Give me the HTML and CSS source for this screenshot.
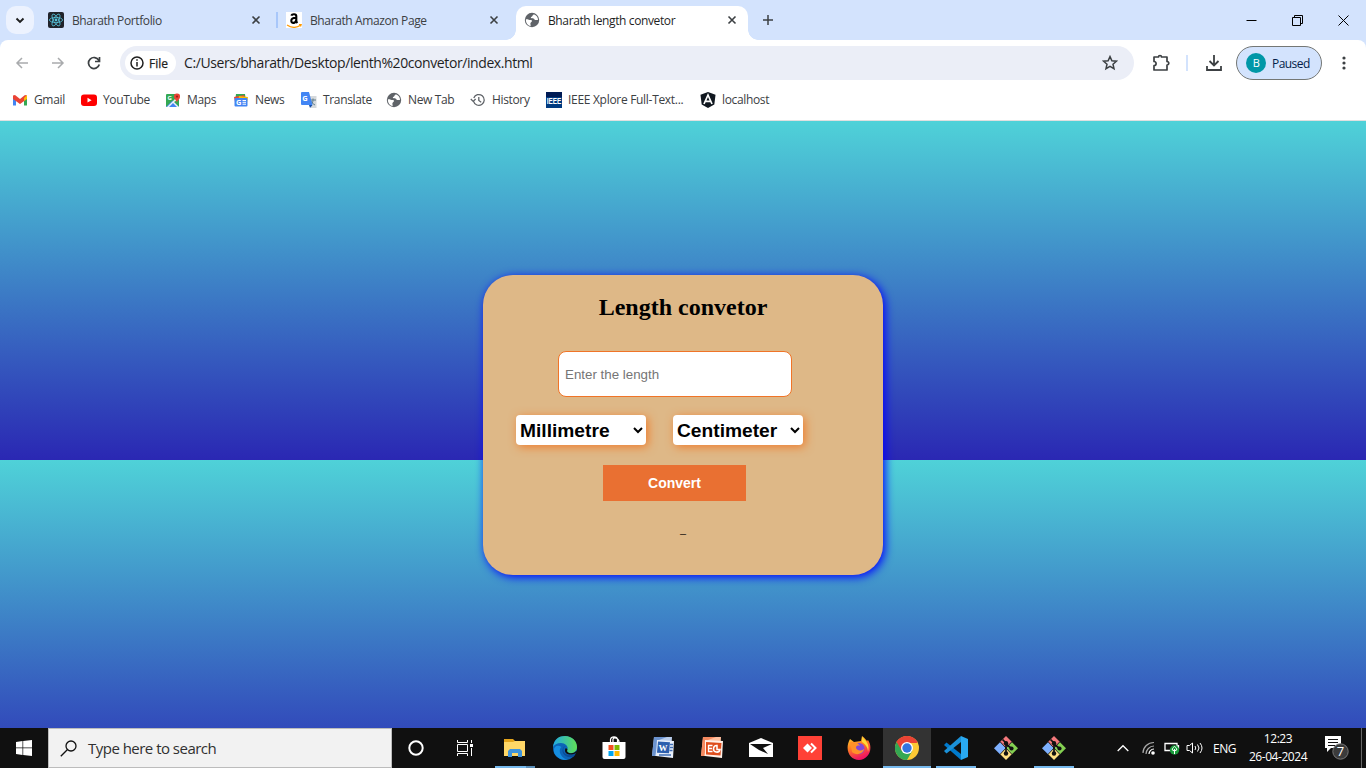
FILE: index.html
```html
<!DOCTYPE html>
<html lang="en">
<head>
<meta charset="utf-8">
<title>Bharath length convetor</title>
<link rel="stylesheet" href="styles.css">
</head>
<body>
<svg class="defs" width="0" height="0">
  <symbol id="globe" viewBox="0 0 16 16"><circle cx="8" cy="8" r="7.2" fill="#5f6368"/><path d="M2 7.3C4 7 5 8 6.500 8c1.300 0 1.800.7 1.300 1.600-.5 1-1.500.9-1.400 2.200 0 .8.500 1.500.2 2.300C3.500 13.500 1.700 11 1.900 7.300zM9.800 2.200c-.3 1-1.400 1-1.500 1.800 0 .7-1.500.6-1.500 1.500 0 1 1.700.8 2.600.9 1 .1 1 1.600 2.100 1.700.9.100 1.500-.3 2.500 0 .2-2.600-1.500-5-4.200-5.900z" fill="#fff"/></symbol>
  <symbol id="close" viewBox="0 0 10 10"><path d="M1.500 1.500l7 7m0-7l-7 7" stroke="#3c4043" stroke-width="1.600" fill="none"/></symbol>
  <symbol id="git" viewBox="0 0 24 24"><path d="M12 0l6 6-6 6-6-6z" fill="#f4787c"/><path d="M6 6.300l6 6-6 6-6-6z" fill="#7eb0ff"/><path d="M18 6.300l6 6-6 6-6-6z" fill="#84d052"/><path d="M12 12.300l6 5.700-6 6-6-6z" fill="#ffe083"/><path d="M6 5.500l12 13M18 5.500L6 18.500" stroke="#222" stroke-width=".9"/><path d="M8.500 3.500L12 7v11M12 8l5.500 4.500" stroke="#111" stroke-width="1.700" fill="none"/><g fill="#111"><circle cx="12" cy="7.200" r="2.200"/><circle cx="12" cy="17.500" r="2.200"/><circle cx="17.500" cy="12.500" r="2.100"/></g></symbol>
</svg>

<div class="tabs">
  <div class="tab-search"><svg width="10" height="7" viewBox="0 0 10 7"><path d="M1.500 1.500L5 5l3.500-3.500" fill="none" stroke="#1f1f1f" stroke-width="1.900"/></svg></div>
  <div class="tab first">
    <svg width="16" height="16" viewBox="0 0 16 16"><rect width="16" height="16" rx="2" fill="#20232a"/><g fill="none" stroke="#56c4dc" stroke-width=".8"><ellipse cx="8" cy="8" rx="6.600" ry="2.600"/><ellipse cx="8" cy="8" rx="6.600" ry="2.600" transform="rotate(60 8 8)"/><ellipse cx="8" cy="8" rx="6.600" ry="2.600" transform="rotate(120 8 8)"/></g><circle cx="8" cy="8" r="1.400" fill="#56c4dc"/></svg>
    <span class="title">Bharath Portfolio</span><svg class="x" width="10" height="10"><use href="#close"/></svg>
  </div>
  <div class="tab second">
    <svg width="16" height="16" viewBox="0 0 16 16"><rect width="16" height="16" fill="#fff"/><path d="M5.300 3.700C6 1.700 10.300 1.500 10.300 4.300v4.200c0 1.500.5 2 1.100 2.600M10 5.800C6.500 5.800 5.300 7 5.300 8.700c0 3.200 4.300 3 5-1" fill="none" stroke="#000" stroke-width="2.100"/><path d="M1 13c4.500 3 9.500 3 13.500.3M13 12.500h2.200l-.7 2" fill="none" stroke="#f90" stroke-width="1.200"/></svg>
    <span class="title">Bharath Amazon Page</span><svg class="x" width="10" height="10"><use href="#close"/></svg>
  </div>
  <div class="tab active">
    <svg width="16" height="16"><use href="#globe"/></svg>
    <span class="title">Bharath length convetor</span><svg class="x" width="10" height="10"><use href="#close"/></svg>
  </div>
  <svg class="plus" width="12" height="12" viewBox="0 0 12 12"><path d="M6 1v10M1 6h10" stroke="#3c4043" stroke-width="1.500"/></svg>
  <div class="window-buttons">
    <svg width="11" height="11" viewBox="0 0 11 11"><path d="M.5 5.500h10" stroke="#000"/></svg>
    <svg width="11" height="11" viewBox="0 0 11 11"><path d="M.5 2.500h8v8h-8zM2.500 2.500v-2h8v8h-2" fill="none" stroke="#000"/></svg>
    <svg width="11" height="11" viewBox="0 0 11 11"><path d="M.5.500l10 10m0-10l-10 10" stroke="#000"/></svg>
  </div>
</div>

<div class="toolbar">
  <svg class="nav" width="14" height="14" viewBox="0 0 14 14"><path d="M13 7H2M7 2L2 7l5 5" fill="none" stroke="#a9abad" stroke-width="1.500"/></svg>
  <svg class="nav" width="14" height="14" viewBox="0 0 14 14"><path d="M1 7h11M7 2l5 5-5 5" fill="none" stroke="#a9abad" stroke-width="1.500"/></svg>
  <svg class="nav" width="14" height="14" viewBox="0 0 14 14"><path d="M11.800 4.300A5.500 5.500 0 1 0 12.300 8.500M12.500 1v4.500H8" fill="none" stroke="#3c4043" stroke-width="1.700"/></svg>
  <div class="address">
    <div class="file"><svg width="14" height="14" viewBox="0 0 14 14"><circle cx="7" cy="7" r="6" fill="none" stroke="#1f1f1f" stroke-width="1.500"/><path d="M7 6v4.500M7 3.300v1.500" stroke="#1f1f1f" stroke-width="1.500"/></svg><span>File</span></div>
    <span class="url">C:/Users/bharath/Desktop/lenth%20convetor/index.html</span>
    <svg class="star" width="16" height="16" viewBox="0 0 16 16"><path d="M8 1.600l1.900 4.200 4.500.4L11 9.200l1 4.500-4-2.400-4 2.400 1-4.500-3.400-3 4.500-.4z" fill="none" stroke="#3c4043" stroke-width="1.500"/></svg>
  </div>
  <svg class="ext" width="18" height="18" viewBox="0 0 18 18"><path d="M2 3h4.500a1.500 1.500 0 0 1 3 0H15v4.500a1.500 1.500 0 0 1 0 3.500v5H2v-4.300a2 2 0 0 0 0-4.200z" fill="none" stroke="#3c4043" stroke-width="1.700" stroke-linejoin="round"/></svg>
  <i class="divider"></i>
  <svg class="down" width="18" height="18" viewBox="0 0 18 18"><path d="M9 1v10M4.500 7L9 11.500 13.500 7M2 12v4h14v-4" fill="none" stroke="#3c4043" stroke-width="1.800"/></svg>
  <div class="profile"><b>B</b><span>Paused</span></div>
  <svg class="menu" width="4" height="16" viewBox="0 0 4 16" fill="#3c4043"><circle cx="2" cy="3" r="1.600"/><circle cx="2" cy="8" r="1.600"/><circle cx="2" cy="13" r="1.600"/></svg>
</div>

<div class="bookmarks">
  <div><svg width="16" height="16" viewBox="0 0 16 16"><path d="M1 13.500V4l3 2v7.500z" fill="#4285f4"/><path d="M15 13.500V4l-3 2v7.500z" fill="#34a853"/><path d="M1 3.500L3 3l5 4 5-4 2 .5V7l-7 5-7-5z" fill="#ea4335"/><path d="M12 6l3-3v4l-3 2z" fill="#fbbc04"/></svg><span>Gmail</span></div>
  <div><svg width="16" height="16" viewBox="0 0 16 16"><rect y="2.500" width="16" height="11.500" rx="3" fill="#f00"/><path d="M6.500 5.800v4.800L10.600 8.200z" fill="#fff"/></svg><span>YouTube</span></div>
  <div><svg width="16" height="16" viewBox="0 0 16 16"><rect x="1" y="2" width="13" height="13" rx="1" fill="#34a853"/><path d="M7.500 8.500L14 15H1z" fill="#4285f4"/><path d="M2 15L14 3v4l-5 3 5 5h-2L8 11l-4 4z" fill="#f1f3f4"/><text x="2.500" y="7.500" class="tiny">G</text><path d="M12 11c-.3-3-3-3.500-3-6.200A3 3 0 0 1 12 1.500a3 3 0 0 1 3 3.300C15 7.500 12.300 8 12 11z" fill="#ea4335"/><circle cx="12" cy="4.600" r="1.100" fill="#9c2219"/></svg><span>Maps</span></div>
  <div><svg width="16" height="16" viewBox="0 0 16 16"><path d="M3 2h9l1 8H2z" fill="#34a853"/><path d="M1 5l10-2 2 7H2z" fill="#ea4335"/><path d="M6 4l9 1-1 6H5z" fill="#fbbc04"/><rect x="1.500" y="6" width="13" height="8.500" rx="1" fill="#4285f4"/><text x="3" y="12.600" class="small">G</text><path d="M9.500 8.500h3.500M9.500 10.300h3.500M9.500 12.200h3.500" stroke="#fff"/></svg><span>News</span></div>
  <div><svg width="16" height="16" viewBox="0 0 16 16"><path d="M6 4h9.500v12H10z" fill="#d5d9dc"/><path d="M9 8h6M12 6.500V8c0 3-1.500 4.500-3 5m1-4c.5 2 2.500 3 4 4" fill="none" stroke="#607d8b"/><path d="M1 0h7l3.500 13H1a1 1 0 0 1-1-1V1a1 1 0 0 1 1-1z" fill="#4285f4"/><path d="M8 13h3.500L9 16z" fill="#174ea6"/><text x="1.300" y="9" class="small">G</text></svg><span>Translate</span></div>
  <div><svg width="16" height="16"><use href="#globe"/></svg><span>New Tab</span></div>
  <div><svg width="16" height="16" viewBox="0 0 16 16"><path d="M3.600 9.300A5.400 5.400 0 1 0 3.800 6M.8 7l2.400 2.400L5.600 7M8.800 5v3.500l2.400 1.700" fill="none" stroke="#5f6368" stroke-width="1.300"/></svg><span>History</span></div>
  <div><svg width="16" height="16" viewBox="0 0 16 16"><rect width="16" height="16" fill="#003a80"/><path d="M0 0h16v5H0z" fill="#001b55"/><text x=".7" y="11.500" class="ieee" textLength="14.600" lengthAdjust="spacingAndGlyphs">IEEE</text></svg><span class="long">IEEE Xplore Full-Text...</span></div>
  <div><svg width="16" height="16" viewBox="0 0 16 16"><path d="M8 0l7.500 2.700L14.300 12.500 8 16 1.700 12.500.5 2.700z" fill="#111820"/><path d="M4 12L8 3l4 9M5.500 9.300h5" fill="none" stroke="#fff" stroke-width="1.700"/></svg><span>localhost</span></div>
</div>

<main class="page">
  <section class="card">
    <h2>Length convetor</h2>
    <input class="length" type="text" placeholder="Enter the length">
    <div class="units">
      <select><option>Millimetre</option></select>
      <select><option>Centimeter</option></select>
    </div>
    <button class="convert">Convert</button>
    <p class="result">–</p>
  </section>
</main>

<footer class="taskbar">
  <div class="start"><svg width="16" height="16" viewBox="0 0 16 16" fill="#fff"><path d="M0 2l6.500-1v6.500H0zM7.200.9L16 0v7.500H7.200zM0 8.300h6.500V15L0 14zM7.200 8.300H16V16l-8.800-1z"/></svg></div>
  <div class="search"><svg width="17" height="17" viewBox="0 0 17 17"><circle cx="11" cy="6" r="5" fill="none" stroke="#111" stroke-width="1.300"/><path d="M7.500 9.500L.8 16.200" stroke="#111" stroke-width="1.300"/></svg><span>Type here to search</span></div>
  <div class="sys"><svg width="16" height="16" viewBox="0 0 16 16"><circle cx="8" cy="8" r="6.700" fill="none" stroke="#fff" stroke-width="2"/></svg></div>
  <div class="sys"><svg width="17" height="16" viewBox="0 0 17 16"><path d="M1.500 0v2.500h10V0M1.500 16v-2.500h10V16M1.500 4.500h10v7h-10zM15.500 0v3M15.500 8v8" fill="none" stroke="#fff"/><path d="M14 4h3v3h-3z" fill="#fff"/></svg></div>
  <div class="app explorer"><svg width="24" height="24" viewBox="0 0 24 24"><path d="M1 3h9l2 2h10v4H1z" fill="#e5a51c"/><path d="M1 6h9l2-1h10v15H1z" fill="#ffd767"/><path d="M5 21v-6l2-2h10l2 2v6h-4v-4H9v4z" fill="#3f94dc"/></svg></div>
  <div class="app"><svg width="24" height="24" viewBox="0 0 24 24"><defs><linearGradient id="eg"><stop stop-color="#20a9e4"/><stop offset="1" stop-color="#60df55"/></linearGradient></defs><circle cx="12" cy="12" r="12" fill="#0c64b7"/><path d="M0 11C1 3 6 0 12 0c7 0 12 5 12 11 0 4-3 6-6 6-4 0-5-2-3.500-3.500C15.500 10 12 7 8 7c-4 0-7 2-8 4z" fill="url(#eg)"/><path d="M8.500 11C4 15 9 23 15 23.500 9 25 2 21 1 16 0 11 4 8 8.500 11z" fill="#168ee0"/><path d="M13 10c-4 0-4 9 3 9 3 0 5-1 7-2-1 1-1 2-2.500 3.500-5 2-11-1-11-6C9.500 12 11 10 13 10z" fill="#0a4c97"/><path d="M14.500 13.500C13 16 16 17.200 18 17.200c2 0 4-.8 5.500-2.500l.5 1.800c-5 3.500-12 2.500-12-2 0-1 .3-2 1-2.500z" fill="#101010"/></svg></div>
  <div class="app"><svg width="24" height="24" viewBox="0 0 24 24"><path d="M8.500 6V3.500C9 0 15 0 15.500 3.500V6M11 6V3c1-2 6-1 6 3" fill="none" stroke="#fff" stroke-width="1.200"/><path d="M.5 6h23v15q0 2-2 2h-19q-2 0-2-2z" fill="#fff"/><path d="M6.500 9h5v5h-5z" fill="#f25022"/><path d="M12.500 9h5v5h-5z" fill="#7fba00"/><path d="M6.500 15h5v5h-5z" fill="#00a4ef"/><path d="M12.500 15h5v5h-5z" fill="#ffb900"/></svg></div>
  <div class="app"><svg width="24" height="24" viewBox="0 0 24 24"><path d="M3 1h18l-1 19H1z" fill="#b9cdec"/><path d="M3 1h13l-8 3-4 16H1z" fill="#6b93cf"/><path d="M6 4l17 1-1 17-17-2z" fill="#e9f0fb"/><path d="M7 5.500l12 .7-1 11-12-.5z" fill="#2c5fae"/><text x="7.500" y="15" class="word">W</text><path d="M19 8.500h3M19 11.500h3M18.500 14.500h3M8 19h12" stroke="#3f6db5" stroke-width="1.300"/></svg></div>
  <div class="app"><svg width="24" height="24" viewBox="0 0 24 24"><path d="M3 1h18l-1 19H1z" fill="#ffc0a0"/><path d="M3 1h13l-8 3-4 16H1z" fill="#f58a60"/><path d="M5 4l18 1-1 17-17-2z" fill="#fff0e8"/><path d="M6 6l15.500 1-1 12.500-14.500-1z" fill="#df4d1c"/><path d="M8 9.500h4.500M8 12.500h4M8 15.500h4.500M8.500 9v7" stroke="#fff" stroke-width="1.300"/><path d="M17 9.500a3.300 3.300 0 1 0 3 4h-3z" fill="none" stroke="#fff" stroke-width="1.500"/></svg></div>
  <div class="app"><svg width="24" height="24" viewBox="0 0 24 24"><path d="M0 7l12-5 12 5v14H0z" fill="#fff"/><path d="M1 8h22l-9 4 5 6-9-4z" fill="#111"/></svg></div>
  <div class="app"><svg width="24" height="24" viewBox="0 0 24 24"><path d="M0 0h24v24H0z" fill="#ff4136"/><path d="M5 12l4.500-4.500L14 12l-4.500 4.500z" fill="#fff"/><path d="M13 7.500l4.500 4.500-4.500 4.500" fill="none" stroke="#fff" stroke-width="2"/></svg></div>
  <div class="app"><svg width="24" height="24" viewBox="0 0 24 24"><defs><linearGradient id="ff" x2=".4" y2="1"><stop stop-color="#ffdf32"/><stop offset=".5" stop-color="#ff7a23"/><stop offset="1" stop-color="#ef1462"/></linearGradient></defs><path d="M3 3l4 3 7-1 1-5c3 2 4 4 5 5l1-1c6 9 0 20-9 20C3 24-3 14 3 3z" fill="url(#ff)"/><circle cx="12" cy="12.500" r="5.500" fill="#8047d9"/><path d="M3 6c4 0 8 0 10 4-3-1-4 0-4 2 1 2 4 4 8 1-1 5-8 7-12 3z" fill="#ff9129"/><path d="M15 1c5 4 8 9 6 15 0-5-3-8-6-10z" fill="#ffd936"/></svg></div>
  <div class="app current"><svg width="24" height="24" viewBox="0 0 24 24"><circle cx="12" cy="12" r="12" fill="#fcc934"/><path d="M12 12L1.600 6A12 12 0 0 1 22.400 6z" fill="#ea4335"/><path d="M12 12L1.600 6A12 12 0 0 0 12 24l5.200-9z" fill="#34a853"/><path d="M12 6h10.400L17.200 15z" fill="#fcc934"/><path d="M1.600 6l5.200 9L9 7h13.400A12 12 0 0 0 1.600 6z" fill="#ea4335"/><circle cx="12" cy="12" r="6" fill="#fff"/><circle cx="12" cy="12" r="4.700" fill="#3474e0"/></svg></div>
  <div class="app open"><svg width="24" height="24" viewBox="0 0 24 24"><path d="M2.500 6.500L17 18v6L0 9z" fill="#007acc"/><path d="M2.500 17.500L17 6V0L0 15z" fill="#1b91d8"/><path d="M17 0l7 3v18l-7 3z" fill="#29a9f2"/></svg></div>
  <div class="app"><svg width="24" height="24"><use href="#git"/></svg></div>
  <div class="app open"><svg width="24" height="24"><use href="#git"/></svg></div>
  <div class="tray">
    <svg class="chev" width="12" height="8" viewBox="0 0 12 8"><path d="M.7 7L6 1.700 11.300 7" fill="none" stroke="#fff" stroke-width="1.300"/></svg>
    <svg class="wifi" width="14" height="14" viewBox="0 0 14 14"><g fill="none" stroke="#aaa" stroke-width="1.200"><path d="M1 12C1 6 6 1.500 12 1.500"/><path d="M4 13c0-4 3.500-8 8-8"/><path d="M7 13c0-2.500 2-5 5-5" stroke="#fff"/></g><circle cx="11" cy="12" r="1.800" fill="#fff"/></svg>
    <svg class="battery" width="16" height="14" viewBox="0 0 16 14"><path d="M1 2.500h12v7H1zM14.500 4v4" fill="none" stroke="#fff" stroke-width="1.300"/><circle cx="10.500" cy="9" r="4.700" fill="#199c3b"/><path d="M10.500 13V8m-2.200 1c0-2 1-2.500 2.200-3.500 1.200 1 2.200 1.500 2.200 3.500l-2.200 1z" fill="none" stroke="#fff"/></svg>
    <svg class="sound" width="17" height="14" viewBox="0 0 17 14"><path d="M1 4.500h2.500L6.500 2v10L3.500 9.500H1zM9 5q1.500 2 0 4M11.500 3.500q3 3.500 0 7M14 2q4 5 0 10" fill="none" stroke="#fff"/></svg>
    <span class="lang">ENG</span>
    <div class="clock"><span class="time">12:23</span><span class="date">26-04-2024</span></div>
    <div class="notice"><svg width="24" height="25" viewBox="0 0 24 25"><path d="M0 0h16v12H6l-4 4v-4H0z" fill="#fff"/><path d="M3 3.500h10M3 6.500h10M3 9.500h7" stroke="#111"/><circle cx="15.500" cy="15.500" r="7.700" fill="#3b3b3b" stroke="#777"/><text x="15.500" y="20" class="count">7</text></svg></div>
  </div>
</footer>
</body>
</html>
```
FILE: styles.css
```css
* { box-sizing: border-box; }
body { margin: 0; width: 1366px; height: 768px; overflow: hidden; display: flex; flex-direction: column; background: #d3e3fd; font-family: "Open Sans", "Noto Sans", sans-serif; font-size: 12px; color: #3c4043; }
svg { display: block; flex: none; }
.defs { position: absolute; }
span { white-space: nowrap; }

.tabs { height: 40px; display: flex; align-items: center; background: #d3e3fd; }
.tab-search { width: 28px; height: 28px; margin-left: 6px; border-radius: 10px; background: #ecf2fe; display: flex; align-items: center; justify-content: center; }
.tab { width: 238px; height: 34px; display: flex; align-items: center; align-self: flex-end; padding: 0 17px 6px 10px; }
.tab.first { margin-left: 4px; padding-right: 15px; }
.tab.second { width: 240px; padding-right: 17px; background: linear-gradient(#a8c7fa, #a8c7fa) -2px 6px / 4px 16px no-repeat; }
.tab.active { width: 232px; border-radius: 10px 10px 0 0; background: #fff; padding: 0 11px 6px 8px; position: relative; color: #1f1f1f; }
.tab.active::before, .tab.active::after { content: ""; position: absolute; bottom: 0; width: 10px; height: 10px; }
.tab.active::before { left: -10px; background: radial-gradient(circle at 0 0, transparent 9.5px, #fff 10px); }
.tab.active::after { right: -10px; background: radial-gradient(circle at 100% 0, transparent 9.5px, #fff 10px); }
.title { margin-left: 8px; letter-spacing: -.38px; }
.x { margin-left: auto; }
.plus { margin-left: 14px; }
.window-buttons { display: flex; margin-left: auto; gap: 35px; padding-right: 17px; }

.toolbar { height: 46px; display: flex; align-items: center; background: #fff; border-radius: 8px 8px 0 0; padding-left: 15px; }
.nav { margin-right: 22px; }
.address { width: 1014px; height: 34px; margin-left: -3px; border-radius: 17px; background: #ebeef7; display: flex; align-items: center; padding: 0 16px 0 5px; }
.file { width: 51px; height: 24px; border-radius: 12px; background: #fff; display: flex; align-items: center; padding-left: 5px; gap: 5px; color: #1f1f1f; -webkit-text-stroke: .25px #1f1f1f; }
.url { font-size: 14px; margin-left: 8px; color: #1f1f1f; letter-spacing: -.41px; line-height: 18px; padding-bottom: 1px; }
.star { margin-left: auto; }
.ext { margin-left: 18px; }
.divider { width: 2px; height: 16px; background: #d3e3fd; margin-left: 16px; }
.down { margin-left: 17px; }
.profile { width: 86px; height: 34px; margin-left: 13px; border: 1px solid #747775; border-radius: 17px; background: #d3e3fd; display: flex; align-items: center; padding-left: 9px; gap: 6px; color: #041e49; letter-spacing: -.55px; }
.profile b { width: 20px; height: 20px; border-radius: 50%; background: #0097a7; color: #fff; font-size: 11px; font-weight: 400; line-height: 20px; text-align: center; }
.menu { margin-left: 20px; }

.bookmarks { height: 35px; background: #fff; border-bottom: 1px solid #e0e0e0; display: grid; grid-template-columns: 69px 84px 68px 68px 85px 84px 76px 154px 90px; padding: 0 0 7px 12px; align-items: center; }
.bookmarks div { display: flex; align-items: center; gap: 6px; letter-spacing: -.35px; }
.bookmarks .long { letter-spacing: -.3px; }
.tiny { font: 700 6px "Open Sans", sans-serif; fill: #fff; }
.small { font: 700 7.500px "Open Sans", sans-serif; fill: #fff; letter-spacing: 0; }
.ieee { font: 700 9px "Liberation Sans", sans-serif; fill: #fff; letter-spacing: 0; }

.page { height: 607px; display: flex; justify-content: center; padding-top: 154px; background: linear-gradient(#4fd2d8, #2a27b3) 0 0 / 100% 339px repeat; }
.card { width: 400px; height: 300px; border-radius: 30px; background: burlywood; box-shadow: 2px 2px 10px blue; color: #000; }
.card h2 { font: 700 24px/28px "Liberation Serif", serif; text-align: center; margin: 18px 0 30px; }
.length { display: block; width: 234px; height: 46px; margin-left: 75px; padding: 1px 6px; border: 1px solid #f07427; border-radius: 8px; font: 13.333px "Liberation Sans", sans-serif; }
.units { display: flex; gap: 27px; margin: 18px 0 20px 33px; }
.units select { width: 130px; height: 30px; border: 0; border-radius: 4px; background-color: #fff; color: #000; font: 700 19.200px "Liberation Sans", sans-serif; box-shadow: 2px 2px 10px #ef7d2d; }
.convert { display: block; width: 143px; height: 36px; margin-left: 120px; padding: 0; border: 0; background: #e97032; color: #fff; font: 700 14px "Liberation Sans", sans-serif; }
.result { margin: 22px 0 0; text-align: center; font: 12px/20px "Liberation Serif", serif; }

.taskbar { height: 40px; display: flex; background: #101010; color: #fff; }
.start { width: 48px; display: flex; align-items: center; justify-content: center; }
.search { width: 344px; background: #f2f2f2; border: 1px solid #bcbcbc; display: flex; align-items: center; gap: 11px; padding-left: 11px; color: #303030; font-size: 15px; letter-spacing: -.52px; }
.sys { width: 48px; display: flex; align-items: center; justify-content: center; }
.sys + .sys { margin-right: 3px; }
.app { width: 49px; display: flex; align-items: center; justify-content: center; }
.explorer { margin-left: -1px; width: 50px; background: linear-gradient(90deg, #76b9ed 31px, #5b8fb9 31px) 5px 100% / 40px 2px no-repeat; }
.current { padding-right: 1px; background: linear-gradient(#76b9ed, #76b9ed) 0 100% / 48px 2px no-repeat, linear-gradient(90deg, #333 48px, transparent 48px); }
.open { padding-right: 1px; background: linear-gradient(#76b9ed, #76b9ed) 4px 100% / 40px 2px no-repeat; }
.word { font: 700 9px "Liberation Serif", serif; fill: #fff; }
.tray { flex: 1; display: flex; align-items: center; padding-left: 38px; }
.chev { margin-right: 13px; }
.wifi { margin-right: 8px; }
.battery { margin-right: 6px; }
.sound { margin-right: 10px; }
.lang { width: 36px; letter-spacing: -.5px; }
.clock { width: 58px; display: flex; flex-direction: column; align-items: center; line-height: 18px; letter-spacing: -.45px; }
.notice { margin-left: 18px; width: 37px; height: 40px; border-right: 1px solid #666; display: flex; align-items: center; }
.count { font: 13px "Open Sans", sans-serif; fill: #fff; text-anchor: middle; }
```
